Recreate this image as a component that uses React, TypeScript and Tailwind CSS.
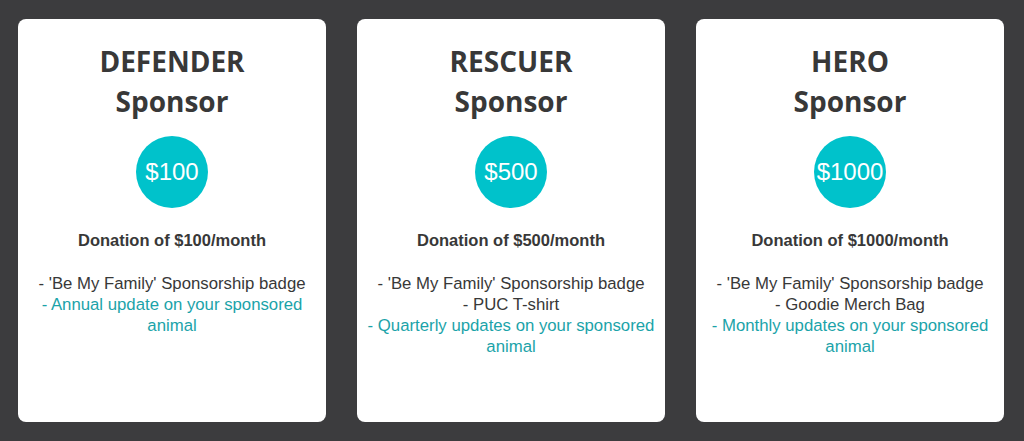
import React from "react";

type Card = {
  tier: string;
  price: string;
  perks: string[];
  highlight: string;
};

const cards: Card[] = [
  {
    tier: "DEFENDER",
    price: "$100",
    perks: ["- 'Be My Family' Sponsorship badge"],
    highlight: "- Annual update on your sponsored animal",
  },
  {
    tier: "RESCUER",
    price: "$500",
    perks: ["- 'Be My Family' Sponsorship badge", "- PUC T-shirt"],
    highlight: "- Quarterly updates on your sponsored animal",
  },
  {
    tier: "HERO",
    price: "$1000",
    perks: ["- 'Be My Family' Sponsorship badge", "- Goodie Merch Bag"],
    highlight: "- Monthly updates on your sponsored animal",
  },
];

export default function App() {
  return (
    <div className="w-[1024px] h-[441px] bg-[#3c3c3e] pl-[18px] pr-[20px] pt-[19px] pb-[19px] flex gap-[31px] overflow-hidden">
      {cards.map((c) => (
        <div
          key={c.tier}
          className="w-[308px] h-[403px] bg-white rounded-[8px] flex flex-col items-center pt-[22px] px-[10px]"
        >
          <h2 className="font-['Open_Sans',sans-serif] font-bold text-[28px] leading-[40px] text-[#383838] text-center">
            {c.tier}
            <br />
            Sponsor
          </h2>
          <div className="mt-[15px] w-[72px] h-[72px] rounded-full bg-[#00c2cb] flex items-center justify-center text-white font-['Liberation_Sans',sans-serif] text-[24px]">
            {c.price}
          </div>
          <p className="mt-[22px] font-['Liberation_Sans',sans-serif] font-bold text-[16.5px] leading-[20px] text-[#383838] text-center">
            Donation of {c.price}/month
          </p>
          <div className="mt-[23px] font-['Liberation_Sans',sans-serif] text-[16.75px] leading-[21px] text-center">
            {c.perks.map((p) => (
              <div key={p} className="text-[#383838]">
                {p}
              </div>
            ))}
            <div className="text-[#1ba3a9]">{c.highlight}</div>
          </div>
        </div>
      ))}
    </div>
  );
}
